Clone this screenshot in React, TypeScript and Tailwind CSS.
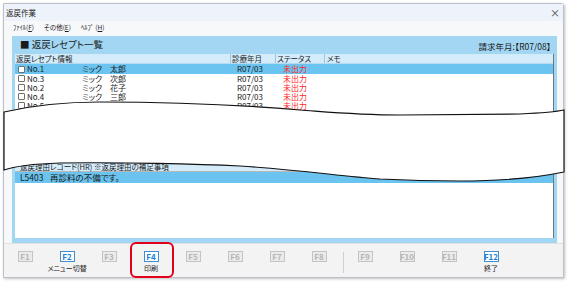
const rows = [
  { no: 'No.1', mei: '太郎', sel: true },
  { no: 'No.3', mei: '次郎' },
  { no: 'No.2', mei: '花子' },
  { no: 'No.4', mei: '三郎' },
  { no: 'No.5', mei: '四郎' },
  { no: 'No.6', mei: '五郎' },
  { no: 'No.7', mei: '六郎' },
  { no: 'No.8', mei: '七郎' },
]

const keys = [
  { k: 'F1' },
  { k: 'F2', on: true, label: 'メニュー切替' },
  { k: 'F3' },
  { k: 'F4', on: true, label: '印刷' },
  { k: 'F5' },
  { k: 'F6' },
  { k: 'F7' },
  { k: 'F8' },
]

const keys2 = [{ k: 'F9' }, { k: 'F10' }, { k: 'F11' }, { k: 'F12', on: true, label: '終了' }]

function FKey({ k, on, label }: { k: string; on?: boolean; label?: string }) {
  return (
    <div className="w-[42px] flex flex-col items-center">
      <div
        className={
          on
            ? 'w-[15px] h-[11px] border border-[#3f8ed3] bg-white text-[#1a7fd6] font-bold text-[8px] leading-[9px] flex items-center justify-center'
            : 'w-[15px] h-[11px] border border-[#c4c4c4] bg-[#ebebeb] text-[#b5b5b5] font-bold text-[8px] leading-[9px] flex items-center justify-center'
        }
      >
        {k}
      </div>
      <div className="mt-[2px] h-[9px] text-[7px] leading-[9px] text-[#222] whitespace-nowrap">{label}</div>
    </div>
  )
}

export default function App() {
  return (
    <div className="relative w-[570px] h-[283px] bg-white overflow-hidden font-['Noto_Sans_CJK_JP','Noto_Sans',sans-serif] [font-feature-settings:'palt'] text-[#1a1a1a]">
      <div className="ml-[3px] mt-[3px] w-[561px] h-[275px] border border-[#b9c0c8] rounded-tr-[3px] bg-[#f7f8fa] flex flex-col shadow-[1px_1px_3px_rgba(0,0,0,0.25)]">
        {/* title bar */}
        <div className="h-[17px] bg-[#eef3fb] flex items-center justify-between pl-[2px] pr-[3px]">
          <span className="text-[7.5px] leading-none">返戻作業</span>
          <span className="text-[10px] leading-none text-[#444]">×</span>
        </div>
        {/* menu */}
        <div className="h-[12px] flex items-center gap-[10px] pl-[9px] text-[6.5px] leading-none">
          <span>ﾌｧｲﾙ(<span className="underline">F</span>)</span>
          <span>その他(<span className="underline">E</span>)</span>
          <span>ﾍﾙﾌﾟ (<span className="underline">H</span>)</span>
        </div>

        {/* panel */}
        <div className="mt-[3px] ml-[8px] mr-[6px] h-[207px] bg-[#a2d6f3] flex flex-col px-[3px] pb-[5px]">
          <div className="h-[18px] flex items-center justify-between pl-[5px] pr-[3px]">
            <span className="text-[9.5px] leading-none">■ 返戻レセプト一覧</span>
            <span className="text-[8.5px] leading-none mt-[3px]">請求年月:【R07/08】</span>
          </div>

          {/* upper list */}
          <div className="h-[86px] bg-white border-r border-[#6d7780] flex flex-col overflow-hidden">
            <div className="h-[10px] flex bg-[#d4ecfa] border-b border-[#b5dbf2] text-[7.5px] leading-[10px] shrink-0">
              <div className="w-[216px] pl-[1px] border-r border-[#9cc6e2]">返戻レセプト情報</div>
              <div className="w-[45px] pl-[1px] border-r border-[#9cc6e2]">診療年月</div>
              <div className="w-[49px] pl-[1px] border-r border-[#9cc6e2]">ステータス</div>
              <div className="flex-1 pl-[2px]">メモ</div>
            </div>
            {rows.map(r => (
              <div
                key={r.no}
                className={(r.sel ? 'bg-[#6ac4ef] h-[10px]' : 'h-[9px]') + ' flex items-center text-[8px] leading-none shrink-0'}
              >
                <div className="w-[216px] flex items-center pl-[3px]">
                  <span className="w-[7px] h-[7px] border border-[#707070] bg-white rounded-[1px]" />
                  <span className="ml-[2px] w-[55px]">{r.no}</span>
                  <span className="w-[28px]">ミック</span>
                  <span>{r.mei}</span>
                </div>
                <div className="w-[45px] pl-[6px]">R07/03</div>
                <div className="w-[49px] pl-[7px] text-[#ff2424]">未出力</div>
                <div className="flex-1" />
              </div>
            ))}
          </div>

          <div className="h-[23px] flex items-end pl-[5px] pb-[2px] text-[8px] leading-none">返戻理由</div>

          {/* lower list */}
          <div className="flex-1 bg-white border-r border-[#6d7780] flex flex-col">
            <div className="h-[9px] bg-[#d4ecfa] border-b border-[#b8b8b8] pl-[5px] text-[7.5px] leading-[8px] whitespace-nowrap">
              返戻理由レコード(HR) ※返戻理由の補足事項
            </div>
            <div className="h-[11px] bg-[#6ac4ef] pl-[5px] flex items-center text-[8.5px] leading-none">
              <span className="w-[30px]">L5403</span>
              <span>再診料の不備です。</span>
            </div>
          </div>
        </div>

        {/* function keys */}
        <div className="flex-1 bg-[#f3f3f3] border-t border-[#e2e2e2] flex pt-[7px]">
          {keys.map(k => (
            <FKey key={k.k} {...k} />
          ))}
          <div className="w-[4px] flex justify-end pt-[1px]">
            <div className="w-px h-[21px] bg-[#cfcfcf]" />
          </div>
          {keys2.map(k => (
            <FKey key={k.k} {...k} />
          ))}
        </div>
      </div>

      {/* red annotation around F4 */}
      <div className="absolute left-[130px] top-[242px] w-[44px] h-[36px] border-[2.5px] border-[#e3001b] rounded-[6px]" />

      {/* torn paper overlay */}
      <svg className="absolute left-0 top-0 pointer-events-none" width="570" height="283" viewBox="0 0 570 283">
        <path
          d="M4,112 C30,106 60,102 100,102 C160,102 230,104 300,110 C340,113 360,115 400,115 L520,114 C540,113 555,112 564,110 L564,172 C540,177 500,181 460,181 C420,181 400,180 380,179 C340,176 300,170 240,166 C200,164 120,162 60,163 C30,164 15,166 4,170 Z"
          fill="#ffffff"
          stroke="#111"
          strokeWidth="1.2"
        />
      </svg>
    </div>
  )
}
